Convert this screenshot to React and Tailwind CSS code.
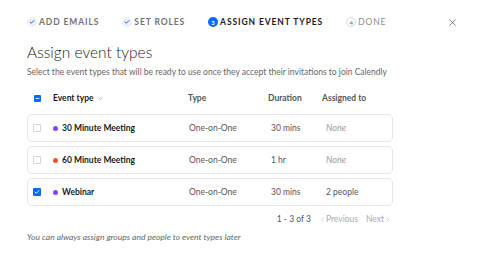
import { X, ChevronDown, ChevronLeft, ChevronRight, Check, Minus } from "lucide-react";

const rows = [
  { name: "30 Minute Meeting", color: "bg-[#8247f5]", type: "One-on-One", duration: "30 mins", assigned: "None", checked: false },
  { name: "60 Minute Meeting", color: "bg-[#f8521f]", type: "One-on-One", duration: "1 hr", assigned: "None", checked: false },
  { name: "Webinar", color: "bg-[#8247f5]", type: "One-on-One", duration: "30 mins", assigned: "2 people", checked: true },
];

function Step({ state, num, label }) {
  return (
    <div className="flex items-center gap-[2px]">
      {state === "done" && (
        <span className="w-[10px] h-[10px] rounded-full bg-[#eef0f3] flex items-center justify-center">
          <Check className="w-[6px] h-[6px] text-[#006bff]" strokeWidth={4} />
        </span>
      )}
      {state === "current" && (
        <span className="w-[10px] h-[10px] rounded-full bg-[#006bff] text-white text-[6px] font-bold flex items-center justify-center">
          {num}
        </span>
      )}
      {state === "todo" && (
        <span className="w-[10px] h-[10px] rounded-full border border-[#dadada] text-[#666] text-[6px] flex items-center justify-center">
          {num}
        </span>
      )}
      <span
        className={
          state === "current"
            ? "text-[8.5px] font-bold tracking-[0.9px] text-[#1a1a1a]"
            : state === "done"
            ? "text-[8.5px] font-bold tracking-[0.9px] text-[#737373]"
            : "text-[8.5px] tracking-[0.9px] text-[#8c8c8c]"
        }
      >
        {label}
      </span>
    </div>
  );
}

export default function App() {
  return (
    <div className="w-[500px] h-[277px] bg-white font-['Lato',sans-serif] text-[#1a1a1a] overflow-hidden">
      {/* steps */}
      <div className="flex items-center h-[42px] pt-[2px] pl-[27px] pr-[42px]">
        <div className="flex items-center gap-[23px]">
          <Step state="done" label="ADD EMAILS" />
          <Step state="done" label="SET ROLES" />
          <Step state="current" num="3" label="ASSIGN EVENT TYPES" />
          <Step state="todo" num="4" label="DONE" />
        </div>
        <X className="ml-auto w-[11px] h-[11px] text-[#555]" strokeWidth={1.5} />
      </div>

      <div className="px-[27px] w-[420px]">
        <h1 className="text-[15.5px] leading-[20px] font-light text-[#1a1a1a]">Assign event types</h1>
        <p className="text-[8.5px] leading-[12px] text-[#666] mt-[4px]">
          Select the event types that will be ready to use once they accept their invitations to join Calendly
        </p>

        {/* header */}
        <div className="flex items-center h-[14px] mt-[13px] text-[8.5px] font-bold text-[#555]">
          <div className="w-[26px] pl-[7px]">
            <span className="w-[7px] h-[7px] bg-[#006bff] rounded-[1px] flex items-center justify-center">
              <Minus className="w-[5px] h-[5px] text-white" strokeWidth={4} />
            </span>
          </div>
          <div className="w-[135px] flex items-center gap-[3px] text-[#1a1a1a]">
            Event type <ChevronDown className="w-[7px] h-[7px] text-[#888]" />
          </div>
          <div className="w-[80px]">Type</div>
          <div className="w-[54px]">Duration</div>
          <div>Assigned to</div>
        </div>

        {/* rows */}
        <div className="flex flex-col gap-[4px] mt-[9px] w-[366px]">
          {rows.map((r) => (
            <div
              key={r.name}
              className="flex items-center h-[28px] border border-[#e6e6e6] rounded-[5px] text-[8.5px]"
            >
              <div className="w-[25px] pl-[5px]">
                {r.checked ? (
                  <span className="w-[8px] h-[8px] bg-[#006bff] rounded-[1px] flex items-center justify-center">
                    <Check className="w-[6px] h-[6px] text-white" strokeWidth={4} />
                  </span>
                ) : (
                  <span className="block w-[8px] h-[8px] border border-[#d4d4d4] rounded-[1px]" />
                )}
              </div>
              <div className="w-[136px] flex items-center gap-[4px] font-bold text-[#1a1a1a]">
                <span className={"w-[5px] h-[5px] rounded-full " + r.color} />
                {r.name}
              </div>
              <div className="w-[82px] text-[#555]">{r.type}</div>
              <div className="w-[55px] text-[#555]">{r.duration}</div>
              <div className={r.assigned === "None" ? "italic text-[9px] text-[#9a9a9a]" : "text-[#555]"}>{r.assigned}</div>
            </div>
          ))}
        </div>

        {/* pagination */}
        <div className="flex items-center justify-end w-[366px] h-[12px] mt-[7px] text-[8.5px] gap-[8px]">
          <span className="text-[#555]">1 - 3 of 3</span>
          <span className="flex items-center text-[#aaa]">
            <ChevronLeft className="w-[7px] h-[7px]" /> Previous
          </span>
          <span className="flex items-center text-[#aaa] pr-[2px]">
            Next <ChevronRight className="w-[7px] h-[7px]" />
          </span>
        </div>

        <p className="text-[8.5px] leading-[12px] italic text-[#666] mt-[6px]">You can always assign groups and people to event types later</p>
      </div>
    </div>
  );
}
